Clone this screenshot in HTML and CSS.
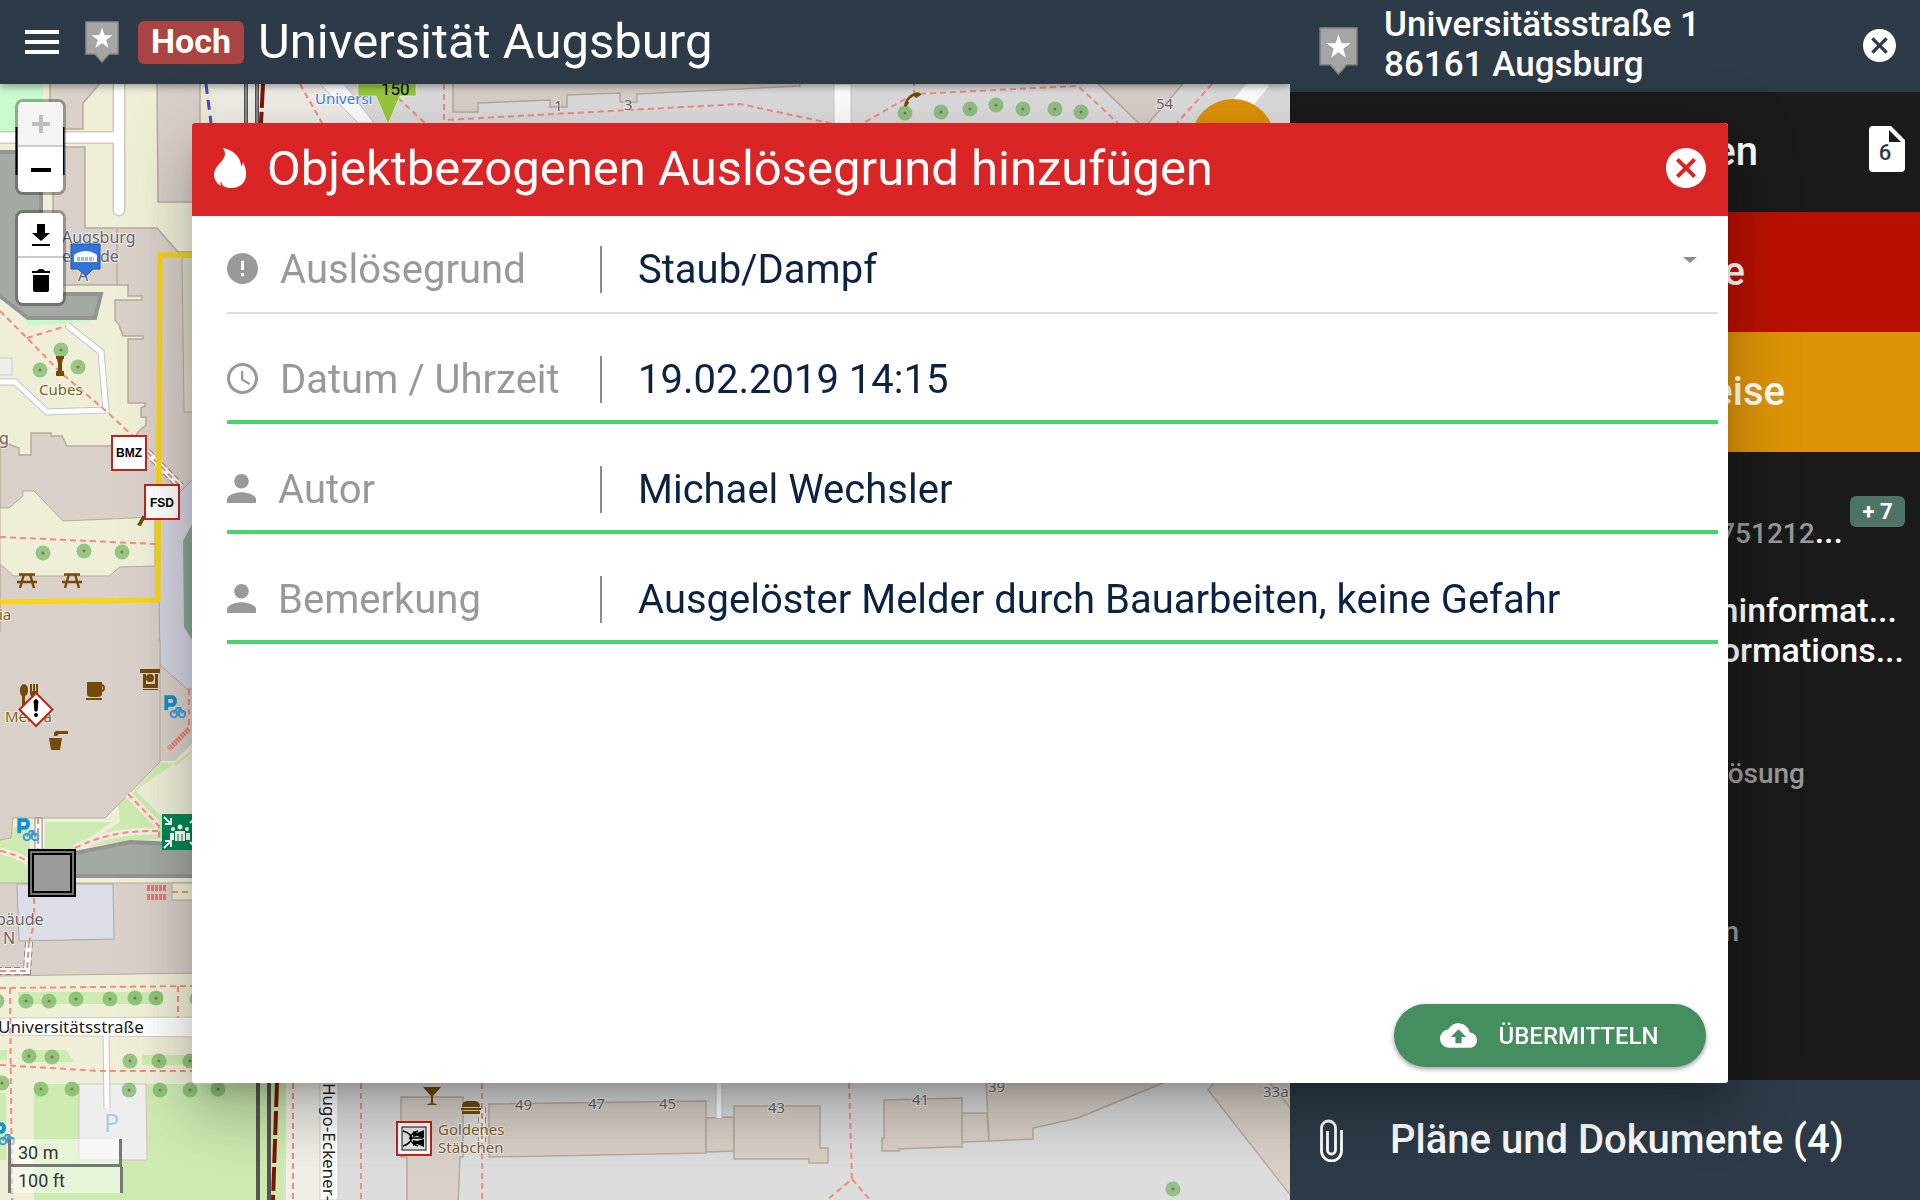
FILE: index.html
```html
<!DOCTYPE html>
<html lang="de">
<head>
    <meta charset="UTF-8">
    <meta name="viewport" content="width=device-width, initial-scale=1.0">
    <title>Universität Augsburg</title>
    <link rel="stylesheet" href="styles.css">
</head>
<body>
    <svg class="defs" width="0" height="0">
        <symbol id="pin" viewBox="0 0 38 47">
            <path d="M1 1H37V37H27L19 46L11 37H1Z" fill="#a5a5a5" stroke="#868686" stroke-width="1.500"/>
            <path d="M19 6L22.200 15.500H32L24.200 21.400L27 31L19 25.200L11 31L13.800 21.400L6 15.500H15.800Z" fill="#fff" stroke="#8b8b8b" stroke-width=".6"/>
        </symbol>
        <symbol id="close" viewBox="2 2 20 20">
            <path fill="currentColor" d="M12 2C6.470 2 2 6.470 2 12s4.470 10 10 10 10-4.470 10-10S17.530 2 12 2zm5 13.590L15.590 17 12 13.410 8.410 17 7 15.590 10.590 12 7 8.410 8.410 7 12 10.590 15.590 7 17 8.410 13.410 12 17 15.590z"/>
        </symbol>
        <symbol id="person" viewBox="4 4 16 16">
            <path fill="currentColor" d="M12 12c2.210 0 4-1.790 4-4s-1.790-4-4-4-4 1.790-4 4 1.790 4 4 4zm0 2c-2.670 0-8 1.340-8 4v2h16v-2c0-2.660-5.330-4-8-4z"/>
        </symbol>
        <symbol id="tree" viewBox="-8 -8 16 16">
            <circle r="7.500" fill="#6fb562" fill-opacity=".7"/>
            <circle r="1.500" fill="#a6692c"/>
        </symbol>
        <symbol id="bike" viewBox="0 0 20 22">
            <path d="M2 14V2H8a4 4 0 0 1 0 7H2" fill="none" stroke="#0f92cf" stroke-width="3.500"/>
            <g fill="none" stroke="#3f9fd4" stroke-width="1.800"><circle cx="9" cy="17.500" r="3"/><circle cx="16.500" cy="17.500" r="3"/><path d="M9 17L12 12H15L17 17M12 17L15 12"/></g>
        </symbol>
        <symbol id="bench" viewBox="0 0 20 15">
            <path d="M2 1.500H18M0 9H20M7 1L3 15M13 1L17 15" fill="none" stroke="#734a08" stroke-width="2.400"/>
        </symbol>
    </svg>

    <div class="app">
        <main class="main">
            <header class="topbar">
                <button class="menu-button" aria-label="Menü"><span></span><span></span><span></span></button>
                <svg class="topbar-pin"><use href="#pin"/></svg>
                <span class="priority">Hoch</span>
                <h1>Universität Augsburg</h1>
            </header>
            <div class="map">
                <svg class="map-canvas" viewBox="0 84 1290 1116" preserveAspectRatio="xMinYMin slice">
                    <rect y="84" width="1290" height="1116" fill="#dddddd"/>
                    <rect y="84" width="234" height="1116" fill="#efefd8"/>
                    <path d="M216 84H340L420 200V1083H216Z" fill="#f2efe9"/>

                    <!-- campus north -->
                    <rect y="84" width="43" height="50" fill="#c8facc"/>
                    <path d="M20 315L95 316L90 322L30 326Z" fill="#c8facc"/>
                    <g class="building">
                        <path d="M50 80H103L83 103V129H50Z"/>
                        <path d="M157 80H200V202H158Z"/>
                        <path d="M53 147H85V228H157L178 252H200V800H160L142 780H0V700H0V441L19 448V455H31V433H51V436H62L67 446H130L138 432L146 425V417H141V408L145 406V403H128V339H143V336H123L119 325L115 320V300H142V296H128V285H62L53 285Z"/>
                        <path d="M117 228V285" fill="none"/>
                    </g>
                    <path d="M182 257H200V412H184Z" fill="#deddc6" stroke="#b8ab9c"/>
                    <path class="road-case" d="M0 137.500H119M119 80V210"/>
                    <path class="road" d="M0 137.500H119M119 80V210"/>
                    <path class="grey-area" d="M-5 152H41V294H101L95 318H28L-5 292Z"/>
                    <path class="lane-case" d="M0 382H15L47 412L106 410L101 352L67 325"/>
                    <path class="lane" d="M0 382H15L47 412L106 410L101 352L67 325"/>
                    <rect x="-2" y="358" width="14" height="17" fill="#eeeeee" stroke="#cfc7bf"/>
                    <path class="footway" d="M0 311L27 338L60 372L106 411L135 438M27 338L66 326"/>
                    <path class="lawn" d="M0 508H9L23 496V491H34L63 521L155 517V566L120 567L109 576H14L0 564Z"/>
                    <path d="M192 480L158 514L160 665L187 689H200V480Z" fill="#d5d5e2" stroke="#a9a6ad"/>
                    <path d="M200 510L183 541L184 627L200 652Z" fill="#86a98f"/>
                    <path class="footway" d="M0 537L155 544M189 689V728"/>
                    <path d="M189 729L169 749" stroke="#f07870" stroke-width="5" stroke-dasharray="2 1"/>
                    <path d="M147 452L181 487" stroke="#8b8b8b" stroke-width="8" stroke-dasharray="6 3"/>
                    <path d="M147 452L181 487" stroke="#fff" stroke-width="6"/>
                    <path class="footway" d="M147 452L181 487"/>
                    <path class="outline" d="M200 255H160L158 600L0 602"/>

                    <!-- campus south -->
                    <path d="M0 780H142L161 761H175L200 735V890H0Z" fill="#efefd8"/>
                    <path d="M200 745L177 765L161 762L135 790L160 815L192 820V835L75 848L30 848L0 842V885H30L76 850L120 822L118 803Z" fill="#cdebb0"/>
                    <path d="M45 822H112L75 848H45Z" fill="#cdebb0"/>
                    <path d="M0 840H10L12 828L30 824V884H0Z" fill="#cdebb0"/>
                    <path d="M-5 640H160V762L105 818H13L11 838L-5 841Z" fill="#d9d0c9" stroke="#b8ab9c"/>
                    <path d="M-5 632H158V668H-5Z" fill="#d9d0c9"/>
                    <path class="path-case" d="M128 794L159 826M75 848C100 836 120 831 158 831M0 851Q17 854 28 862"/>
                    <path class="footway" d="M128 794L159 826V840M75 848C100 836 120 831 158 831M0 851Q17 854 28 862"/>
                    <path class="grey-area" d="M60 856L130 842L200 845V876H60Z"/>
                    <path d="M35 818H42V850H35Z" fill="#fff" stroke="#888"/>
                    <path class="footway" d="M38 818V850"/>
                    <path d="M-5 883H200V973L-5 976Z" fill="#d9d0c9" stroke="#b8ab9c"/>
                    <path d="M172 883H200V900H172Z" fill="#efefd8" stroke="#b8ab9c"/>
                    <path d="M17 884H113L114 939L19 941Z" fill="#dddde8" stroke="#a9a6ad"/>
                    <path d="M147 888H166M147 897H166" stroke="#f5706a" stroke-width="6" stroke-dasharray="3 1"/>
                    <path class="footway" d="M172 892H192M34 898V925L29 942"/>
                    <path d="M29 942L27 971H0" fill="none" stroke="#888" stroke-width="8" stroke-dasharray="6 3"/>
                    <path d="M29 942L27 971H0" fill="none" stroke="#fff" stroke-width="6"/>
                    <path class="footway" d="M29 942L27 971H0"/>
                    <path d="M18 992H163V1004H18ZM0 1050H7V1060H0ZM25 1050H66L74 1062H25ZM142 1055H200V1065H142Z" fill="#cdebb0"/>
                    <path d="M0 1093H6V1160H0ZM34 1084H288L283 1200H34Z" fill="#cdebb0"/>
                    <path d="M79 1084H146L147 1160H79Z" fill="#eeeeee" stroke="#ccc3ba"/>
                    <path d="M0 1018L200 1017V1037L0 1035Z" fill="#fff" stroke="#cfcabb"/>
                    <path class="lane-case" d="M106 1036L107 1108"/>
                    <path class="lane" d="M106 1034L107 1108"/>
                    <path class="footway" d="M0 988L192 986M10 988L12 1200M178 986V1018M0 1065L100 1071H192"/>
                    <g>
                        <use href="#tree" x="-11" y="993" width="16" height="16"/><use href="#tree" x="18" y="993" width="16" height="16"/>
                        <use href="#tree" x="41" y="993" width="16" height="16"/><use href="#tree" x="68" y="991" width="16" height="16"/>
                        <use href="#tree" x="102" y="991" width="16" height="16"/><use href="#tree" x="127" y="990" width="16" height="16"/>
                        <use href="#tree" x="148" y="990" width="16" height="16"/><use href="#tree" x="189" y="991" width="16" height="16"/>
                        <use href="#tree" x="21" y="1048" width="16" height="16"/><use href="#tree" x="44" y="1049" width="16" height="16"/>
                        <use href="#tree" x="122" y="1053" width="16" height="16"/><use href="#tree" x="151" y="1053" width="16" height="16"/>
                        <use href="#tree" x="182" y="1053" width="16" height="16"/><use href="#tree" x="-6" y="1075" width="16" height="16"/>
                        <use href="#tree" x="33" y="1081" width="16" height="16"/><use href="#tree" x="64" y="1081" width="16" height="16"/>
                        <use href="#tree" x="121" y="1082" width="16" height="16"/><use href="#tree" x="152" y="1082" width="16" height="16"/>
                        <use href="#tree" x="182" y="1082" width="16" height="16"/><use href="#tree" x="210" y="1081" width="16" height="16"/>
                        <use href="#tree" x="35" y="545" width="16" height="16"/><use href="#tree" x="76" y="543" width="16" height="16"/>
                        <use href="#tree" x="114" y="544" width="16" height="16"/><use href="#tree" x="53" y="342" width="16" height="16"/>
                        <use href="#tree" x="32" y="362" width="16" height="16"/><use href="#tree" x="70" y="359" width="16" height="16"/>
                    </g>

                    <!-- tram line -->
                    <path d="M286 1083V1200H320V1083Z" fill="#f2efe9"/>
                    <path d="M246 84V123M257 84V123M258 1083V1200M269 1083V1200" stroke="#555" stroke-width="4"/>
                    <path d="M246 84V123M257 84V123" stroke="#bbb" stroke-width="1"/>
                    <path d="M263 84L261 123M277 1083L273 1200" stroke="#7d1608" stroke-width="4" stroke-dasharray="24 4"/>
                    <path d="M206 84L211 123" stroke="#4747e0" stroke-width="3" stroke-dasharray="10 6"/>

                    <!-- strip above the dialog -->
                    <path d="M345 84H834V123H376Z" fill="#dddddd"/>
                    <path d="M320 84H344L374 123H358Z" fill="#fff" stroke="#c5c5c5"/>
                    <path class="building" d="M453 80V112H478V103L550 100V107H567V95L620 93V102H637V94L800 86V80Z"/>
                    <path class="footway" d="M300 84L322 123M398 98L425 123M444 84V120L740 104L834 124M914 80V94L1078 86L1118 123M914 94L860 125H950M1212 84L1177 123"/>
                    <path d="M834 84H851V130H834Z" fill="#fff" stroke="#c9c9c9"/>
                    <path class="building" d="M1098 84L1144 128L1183 84Z"/>
                    <path d="M1262 80L1220 130" stroke="#fff" stroke-width="19"/>
                    <use href="#tree" x="897" y="105" width="16" height="16"/><use href="#tree" x="933" y="104" width="16" height="16"/>
                    <use href="#tree" x="962" y="101" width="16" height="16"/><use href="#tree" x="988" y="97" width="16" height="16"/>
                    <use href="#tree" x="1015" y="101" width="16" height="16"/><use href="#tree" x="1047" y="101" width="16" height="16"/>
                    <use href="#tree" x="1073" y="104" width="16" height="16"/>
                    <path d="M906 107L909 103L908 101Q910 98 914 96L916 98L921 95Q920 91 914 93Q905 97 904 106Z" fill="#734a08"/>
                    <circle cx="1233" cy="141" r="42" fill="#dd9307"/>

                    <!-- strip below the dialog -->
                    <path d="M320 1083H338V1200H320Z" fill="#fff" stroke="#c9c9c9"/>
                    <g class="building">
                        <path d="M401 1097H463V1157H460L458 1205H407V1157H401Z"/>
                        <path d="M489 1104L706 1101V1153L489 1157Z"/>
                        <path d="M706 1118L734 1117V1151L706 1152Z"/>
                        <path d="M734 1106H820V1148H828V1163H809V1159H734Z"/>
                        <path d="M884 1100L962 1098V1147H950L899 1149V1151H882V1138H884Z"/>
                        <path d="M962 1113H987L989 1141L962 1142Z"/>
                        <path d="M986 1080H1170L1078 1118L1033 1128V1139L989 1141Z"/>
                        <path d="M1216 1080L1208 1090L1295 1201V1080Z"/>
                        <path d="M1270 1083L1292 1110" fill="none"/>
                    </g>
                    <path class="lane-case" d="M719 1083V1118"/>
                    <path class="lane" d="M719 1083V1118"/>
                    <path d="M482 1107V1142" stroke="#999" stroke-width="8" stroke-dasharray="6 4"/>
                    <path d="M482 1107V1142" stroke="#eee" stroke-width="6"/>
                    <path class="footway" d="M293 1083V1200M361 1083V1200M482 1083V1200M849 1083L852 1179L827 1200M852 1179L870 1200"/>
                    <use href="#tree" x="1165" y="1181" width="16" height="16"/>

                    <!-- labels -->
                    <g class="label">
                        <text x="62" y="243">Augsburg</text>
                        <text x="62" y="262">e</text><text x="100" y="262">de</text>
                        <text x="78" y="281">A</text>
                        <text x="-1" y="444">g</text>
                        <text x="-4" y="925">bäude</text>
                        <text x="3" y="944">N</text>
                    </g>
                    <g class="label brown">
                        <text x="39" y="395">Cubes</text>
                        <text x="-1" y="620">ia</text>
                        <text x="5" y="722">Mensa</text>
                        <text x="438" y="1135">Goldenes</text>
                        <text x="438" y="1153">Stäbchen</text>
                    </g>
                    <g class="label number">
                        <text x="554" y="111">1</text><text x="624" y="110">3</text><text x="1156" y="109">54</text>
                        <text x="515" y="1110">49</text><text x="588" y="1109">47</text><text x="659" y="1109">45</text>
                        <text x="768" y="1113">43</text><text x="912" y="1105">41</text><text x="988" y="1092">39</text><text x="1263" y="1097">33a</text>
                    </g>
                    <text class="label street" x="-2" y="1033">Universitätsstraße</text>
                    <text class="label street" transform="translate(323 1083) rotate(90)">Hugo-Eckener-S</text>
                    <text class="label blue" x="315" y="104">Universi</text>
                    <text class="parking" x="104" y="1132">P</text>

                    <!-- points of interest -->
                    <g fill="#734a08">
                        <path d="M56 356H64V359H63L62 364V371H64V376H56V371H58V364L57 359H56Z"/>
                        <path d="M137 525L143 515L145 518L141 526Z"/>
                        <path d="M20 690a4 6 0 0 1 8 0q0 5-3 6V706H22V696Q20 695 20 690ZM30 684H32V691H33V684H35V691H36V684H38V692Q38 696 35 697V706H32V697Q30 696 30 692Z"/>
                        <path d="M87 682H102V694Q102 697 98 697H91Q87 697 87 694ZM86 698H102V700H86Z"/>
                        <path d="M140 669H160V673H140ZM143 674H146V684H155V674H158V688H143ZM143 689H158V690H143Z"/><circle cx="150" cy="678" r="4"/>
                        <path d="M49 738H62L60 750H51ZM54 733Q55 730 59 731H68V734H59L57 736H54Z"/>
                        <path d="M423 1087H441L433 1096V1103L438 1105H426L431 1103V1096Z"/>
                        <path d="M462 1107Q462 1101 467 1101H475Q480 1101 480 1107ZM461 1108H481V1110H461ZM462 1111H480V1114H462Z"/>
                    </g>
                    <path d="M101 685a3 3 0 1 1 0 6" fill="none" stroke="#734a08" stroke-width="2"/>
                    <use href="#bench" x="17" y="573" width="20" height="15"/>
                    <use href="#bench" x="62" y="573" width="20" height="15"/>
                    <use href="#bike" x="164" y="695" width="22" height="24"/>
                    <use href="#bike" x="17" y="818" width="22" height="24"/>
                    <use href="#bike" x="-7" y="1122" width="22" height="24"/>

                    <!-- object markers -->
                    <path d="M71 244H100V269H93L86 276L78 269H71Z" fill="#3274d8" stroke="#1f56ad"/>
                    <path d="M74 255Q86 247 97 255V262H74Z" fill="#fff"/>
                    <path d="M77 258H94M77 260H94" stroke="#3274d8" stroke-width="1" stroke-dasharray="3 1"/>
                    <path d="M358 84H416V96H400L388 124L376 96H358Z" fill="#99c83c" stroke="#fff" stroke-width=".5"/>
                    <text class="hydrant" x="381" y="95">150</text>
                    <rect class="sign" x="112" y="436" width="34" height="34"/>
                    <text class="sign-text" x="129" y="457">BMZ</text>
                    <rect class="sign" x="145" y="485" width="34" height="34"/>
                    <text class="sign-text" x="162" y="507">FSD</text>
                    <path class="sign" d="M36 693L52.500 709.500L36 726L19.500 709.500Z"/>
                    <path d="M34 701Q36 698 38 701L37 711H35Z" stroke="#000"/><circle cx="36" cy="715" r="2"/>
                    <rect x="29" y="850" width="46" height="46" fill="#9b9b9b" stroke="#000" stroke-width="2"/>
                    <rect x="31" y="852" width="42" height="42" fill="none" stroke="#777" stroke-width="2"/>
                    <rect x="33" y="854" width="38" height="38" fill="none" stroke="#000" stroke-width="2"/>
                    <path d="M16.500 127V175M63.500 127V175" stroke="#000" stroke-width="2"/>
                    <rect x="162" y="814" width="36" height="36" fill="#008755"/>
                    <path d="M164 817L170 823M171 818V824H165M164 848L170 842M165 841H171V847M196 817L190 823M196 848L190 842" fill="none" stroke="#fff" stroke-width="2"/>
                    <g fill="#fff"><circle cx="180" cy="827" r="2.500"/><circle cx="173" cy="829" r="2"/><circle cx="187" cy="829" r="2"/><path d="M175 831H185V841H175ZM170 833H174V840H170ZM186 833H190V840H186Z"/></g>
                    <path d="M178 834V841M182 834V841" stroke="#008755"/>
                    <rect class="sign" x="397" y="1122" width="34" height="33"/>
                    <rect x="402" y="1127" width="24" height="23" fill="#e6e6e6" stroke="#111"/>
                    <path d="M403 1131Q410 1133 412 1138Q410 1144 403 1146M418 1131Q411 1133 410 1138Q411 1144 418 1146M409 1138H423" fill="none" stroke="#000" stroke-width="1.500"/>
                    <path d="M413 1131L417 1133L424 1130V1138L417 1136L413 1137ZM413 1146L417 1144L424 1147V1139L417 1141L413 1140Z"/>
                </svg>

                <div class="controls">
                    <div class="control-group">
                        <button aria-label="Vergrößern" disabled>
                            <svg width="20" height="20" viewBox="0 0 20 20"><path d="M10 1V19M1 10H19" stroke="#bdbdbd" stroke-width="4"/></svg>
                        </button>
                        <button aria-label="Verkleinern">
                            <svg width="20" height="20" viewBox="0 0 20 20"><path d="M0 10H20" stroke="#000" stroke-width="4"/></svg>
                        </button>
                    </div>
                    <div class="control-group">
                        <button aria-label="Herunterladen">
                            <svg width="20" height="24" viewBox="0 0 20 24"><path d="M6 1H14V10H19L10 18L1 10H6ZM1 21H19V23H1Z"/></svg>
                        </button>
                        <button aria-label="Löschen">
                            <svg width="20" height="24" viewBox="0 0 20 24"><path d="M1 2H6L8 0H12L14 2H19V4H1ZM2 6H18V21Q18 23 16 23H4Q2 23 2 21Z"/></svg>
                        </button>
                    </div>
                </div>
                <div class="scale">
                    <div class="scale-line">30 m</div>
                    <div class="scale-line imperial">100 ft</div>
                </div>
            </div>
        </main>

        <aside class="sidebar">
            <header class="address">
                <svg class="address-pin"><use href="#pin"/></svg>
                <p>Universitätsstraße 1<br>86161 Augsburg</p>
                <button class="icon-button close-small" aria-label="Schließen"><svg><use href="#close"/></svg></button>
            </header>
            <section class="panel">
                <h2 class="info">en</h2>
                <span class="doc-count">
                    <svg viewBox="0 0 36 46"><path d="M4 0H22L36 14V42Q36 46 32 46H4Q0 46 0 42V4Q0 0 4 0ZM20 4V16H32Z" fill="#fff" fill-rule="evenodd"/></svg>
                    <span>6</span>
                </span>
            </section>
            <section class="panel panel-red"><h2 class="danger">e</h2></section>
            <section class="panel panel-orange"><h2 class="notes">eise</h2></section>
            <section class="contacts">
                <div class="phone">
                    <p><span class="muted">751212</span>...</p>
                    <span class="more">+ 7</span>
                </div>
                <div class="details">
                    <p class="line-one">ninformat...</p>
                    <p class="line-two">ormations...</p>
                </div>
                <p class="muted cause">lösung</p>
                <p class="muted remark">n</p>
            </section>
            <footer class="documents">
                <svg class="clip" viewBox="0 0 23 43"><path d="M21.500 11V32a10 10 0 0 1-20 0V9a7 7 0 0 1 14 0V31a4 4 0 0 1-8 0V12" fill="none" stroke="#fff" stroke-width="2.800"/></svg>
                <h2>Pläne und Dokumente (4)</h2>
            </footer>
        </aside>
    </div>

    <div class="overlay">
        <form class="dialog">
            <header class="dialog-header">
                <svg class="flame" viewBox="0 0 32 40"><path d="M9 0C20 2 27 10 27 18Q29 17 29 14Q33 22 32 28C31 36 25 40 17 40C11 40 8 38 7 33Q6 36 7 38C2 35 0 31 0 26C1 17 11 13 11 6Q11 3 9 0Z" fill="#fff"/></svg>
                <h2>Objektbezogenen Auslösegrund hinzufügen</h2>
                <button type="button" class="icon-button close-large" aria-label="Schließen"><svg><use href="#close"/></svg></button>
            </header>
            <div class="row row-select">
                <label for="reason">
                    <svg class="icon" viewBox="2 2 20 20"><path fill="currentColor" d="M12 2C6.480 2 2 6.480 2 12s4.480 10 10 10 10-4.480 10-10S17.520 2 12 2zm1 15h-2v-2h2v2zm0-4h-2V7h2v6z"/></svg>
                    Auslösegrund
                </label>
                <select id="reason"><option>Staub/Dampf</option></select>
                <svg class="arrow" viewBox="0 0 14 6"><path d="M0 0H14L7 6Z" fill="#8d8d8d"/></svg>
            </div>
            <div class="row">
                <label for="date">
                    <svg class="icon" viewBox="2 2 20 20"><path fill="currentColor" d="M11.990 2C6.470 2 2 6.480 2 12s4.470 10 9.990 10C17.520 22 22 17.520 22 12S17.520 2 11.990 2zM12 20c-4.420 0-8-3.580-8-8s3.580-8 8-8 8 3.580 8 8-3.580 8-8 8zm.5-13H11v6l5.250 3.150.75-1.230-4.500-2.670z"/></svg>
                    Datum / Uhrzeit
                </label>
                <input id="date" type="text" value="19.02.2019 14:15">
            </div>
            <div class="row">
                <label for="author"><svg class="icon icon-person"><use href="#person"/></svg>Autor</label>
                <input id="author" type="text" value="Michael Wechsler">
            </div>
            <div class="row">
                <label for="comment"><svg class="icon icon-person"><use href="#person"/></svg>Bemerkung</label>
                <input id="comment" type="text" value="Ausgelöster Melder durch Bauarbeiten, keine Gefahr">
            </div>
            <div class="actions">
                <button type="button" class="submit">
                    <svg viewBox="0 4 24 16"><path fill="#fff" d="M19.350 10.040C18.670 6.590 15.640 4 12 4 9.110 4 6.600 5.640 5.350 8.040 2.340 8.360 0 10.910 0 14c0 3.310 2.690 6 6 6h13c2.760 0 5-2.240 5-5 0-2.640-2.050-4.780-4.650-4.960zM14 13v4h-4v-4H7l5-5 5 5h-3z"/></svg>
                    ÜBERMITTELN
                </button>
            </div>
        </form>
    </div>
</body>
</html>
```
FILE: styles.css
```css
* {
    box-sizing: border-box;
}
body {
    margin: 0;
    font-family: Roboto, sans-serif;
    color: #fff;
    background-color: #1a1a1a;
}
h1, h2, p {
    margin: 0;
}
h2 {
    font-size: 40px;
    font-weight: 500;
    line-height: 48px;
}
button {
    padding: 0;
    border: none;
    background: none;
    font-family: inherit;
}
.defs {
    position: absolute;
}
.app {
    display: grid;
    grid-template-columns: minmax(0, 1fr) 630px;
    height: 100vh;
    overflow: hidden;
}

/* left side */
.main {
    display: flex;
    flex-direction: column;
    min-height: 0;
}
.topbar {
    position: relative;
    z-index: 1;
    display: flex;
    align-items: center;
    flex: none;
    height: 84px;
    padding-left: 25px;
    background-color: #2d3b48;
    box-shadow: 0 2px 8px rgba(0, 0, 0, 0.4);
}
.menu-button {
    display: flex;
    flex-direction: column;
    gap: 6px;
    width: 34px;
    margin-right: 26px;
}
.menu-button span {
    height: 4px;
    background-color: #fff;
}
.topbar-pin {
    width: 34px;
    height: 42px;
    margin-right: 19px;
}
.priority {
    height: 43px;
    padding: 0 13px;
    border-radius: 6px;
    background-color: #a94442;
    font-size: 34px;
    font-weight: 700;
    line-height: 40px;
}
.topbar h1 {
    margin-left: 14px;
    font-size: 49px;
    font-weight: 400;
    line-height: 56px;
}
.map {
    position: relative;
    flex: 1;
    min-height: 0;
    overflow: hidden;
}
.map-canvas {
    display: block;
    width: 100%;
    height: 100%;
}
.building {
    fill: #d9d0c9;
    stroke: #b8ab9c;
    stroke-width: 1.5;
}
.lawn {
    fill: #efefd8;
    stroke: #b8ab9c;
}
.grey-area {
    fill: #a3aaa2;
    stroke: #949494;
    stroke-width: 4;
}
.road, .road-case, .lane, .lane-case, .path-case, .footway, .outline {
    fill: none;
}
.road {
    stroke: #fff;
    stroke-width: 10;
    stroke-linecap: round;
}
.road-case {
    stroke: #cfcabb;
    stroke-width: 13;
    stroke-linecap: round;
}
.lane {
    stroke: #fff;
    stroke-width: 5;
}
.lane-case {
    stroke: #c4c4c4;
    stroke-width: 7;
}
.path-case {
    stroke: #f3ecdc;
    stroke-width: 7;
}
.footway {
    stroke: #f58a7d;
    stroke-width: 2;
    stroke-dasharray: 6 4;
}
.outline {
    stroke: #f9d40f;
    stroke-width: 5;
}
.label {
    font-family: "Noto Sans", sans-serif;
    font-size: 16px;
    fill: #666;
    stroke: rgba(255, 255, 255, 0.6);
    stroke-width: 2;
    paint-order: stroke;
}
.brown {
    font-size: 15px;
    fill: #80602c;
}
.number {
    font-size: 15px;
}
.street {
    font-size: 17px;
    fill: #222;
}
.blue {
    font-size: 15px;
    fill: #3a7fe8;
}
.parking {
    font-family: "Noto Sans", sans-serif;
    font-size: 25px;
    fill: #a3cfe6;
}
.hydrant {
    font-size: 17px;
}
.sign {
    fill: #fff;
    stroke: #c0241c;
    stroke-width: 2;
}
.sign-text {
    font-family: "Liberation Sans", sans-serif;
    font-size: 12px;
    font-weight: 700;
    text-anchor: middle;
}
.controls {
    position: absolute;
    top: 15px;
    left: 15px;
    display: flex;
    flex-direction: column;
    gap: 15px;
}
.control-group {
    width: 51px;
    border: 3px solid rgba(0, 0, 0, 0.3);
    border-radius: 8px;
}
.control-group button {
    display: flex;
    align-items: center;
    justify-content: center;
    width: 100%;
    height: 45px;
    background-color: #fff;
}
.control-group button:first-child {
    border-bottom: 2px solid #ccc;
    border-radius: 5px 5px 0 0;
}
.control-group button:last-child {
    border-radius: 0 0 5px 5px;
}
.control-group button:disabled {
    background-color: #f4f4f4;
}
.scale {
    position: absolute;
    bottom: 7px;
    left: 8px;
    color: #333;
    font-size: 18px;
    line-height: 28px;
}
.scale-line {
    width: 114px;
    height: 28px;
    padding-left: 7px;
    border: 3px solid #777;
    border-top: none;
    background-color: rgba(255, 255, 255, 0.5);
}
.imperial {
    width: 115px;
    height: 26px;
    border-bottom: none;
}

/* right side */
.sidebar {
    position: relative;
    z-index: 1;
    display: flex;
    flex-direction: column;
    min-height: 0;
    background-color: #1a1a1a;
}
.address {
    display: flex;
    align-items: center;
    flex: none;
    height: 92px;
    padding: 0 24px 2px 29px;
    background-color: #2d3b48;
}
.address-pin {
    width: 39px;
    height: 48px;
    margin-top: 12px;
}
.address p {
    flex: 1;
    margin-left: 26px;
    font-size: 35px;
    font-weight: 500;
    line-height: 40px;
}
.icon-button {
    display: flex;
    cursor: pointer;
    color: #fff;
}
.icon-button svg {
    width: 100%;
    height: 100%;
}
.close-small {
    width: 33px;
    height: 33px;
}
.panel {
    display: flex;
    align-items: center;
    justify-content: space-between;
    flex: none;
    height: 120px;
    padding: 0 15px 0 101px;
}
.panel h2 {
    text-align: right;
}
.panel .info {
    width: 367px;
}
.panel .danger {
    width: 354px;
}
.panel .notes {
    width: 394px;
}
.panel-red {
    background-color: #b81000;
}
.panel-orange {
    background-color: #dd9307;
}
.doc-count {
    display: grid;
    width: 36px;
    height: 46px;
    margin-bottom: 6px;
}
.doc-count svg, .doc-count span {
    grid-area: 1 / 1;
}
.doc-count span {
    padding: 14px 4px 0 0;
    color: #2d3b48;
    font-size: 22px;
    font-weight: 500;
    line-height: 26px;
    text-align: center;
}
.contacts {
    flex: 1;
    min-height: 0;
    padding: 44px 15px 0 101px;
    overflow: hidden;
    font-size: 34px;
    font-weight: 500;
    line-height: 40px;
    text-align: right;
}
.muted {
    color: #999;
    font-size: 28px;
}
.phone {
    display: flex;
    align-items: flex-start;
    justify-content: flex-end;
    gap: 7px;
    margin-bottom: 36px;
}
.phone p {
    margin-top: 15px;
}
.more {
    width: 55px;
    height: 31px;
    border-radius: 6px;
    background-color: #4d7466;
    font-size: 22px;
    font-weight: 700;
    line-height: 31px;
    text-align: center;
}
.line-one {
    padding-right: 8px;
}
.line-two {
    padding-right: 1px;
}
.cause {
    margin-top: 84px;
    padding-right: 100px;
}
.remark {
    margin-top: 118px;
    padding-right: 166px;
}
.documents {
    display: flex;
    align-items: center;
    flex: none;
    height: 120px;
    padding-left: 30px;
    background-color: #2d3b48;
}
.clip {
    width: 23px;
    height: 43px;
    margin-right: 47px;
}

/* dialog */
.overlay {
    position: fixed;
    z-index: 2;
    inset: 6px 0 0;
    display: flex;
    align-items: center;
    justify-content: center;
}
.dialog {
    display: flex;
    flex-direction: column;
    width: 80%;
    height: 80vh;
    overflow: hidden;
    border-radius: 3px;
    background-color: #fff;
    box-shadow: 0 16px 22px -10px rgba(0, 0, 0, 0.2),
        0 36px 57px 4px rgba(0, 0, 0, 0.14),
        0 14px 70px 12px rgba(0, 0, 0, 0.12);
}
.dialog-header {
    display: flex;
    align-items: center;
    flex: none;
    height: 93px;
    padding: 0 22px 3px;
    background-color: #d92526;
}
.flame {
    width: 32px;
    height: 40px;
}
.dialog-header h2 {
    flex: 1;
    margin-left: 21px;
    padding-top: 2px;
    font-size: 49px;
    font-weight: 400;
    line-height: 56px;
}
.close-large {
    width: 40px;
    height: 40px;
}
.row {
    display: flex;
    align-items: center;
    height: 110px;
    margin: 0 10px 0 35px;
    padding: 42px 0 17px;
    border-bottom: 4px solid #46d370;
}
.row-select {
    height: 98px;
    padding: 30px 0 19px;
    border-bottom: 2px solid #e0e0e0;
}
.row label {
    display: flex;
    align-items: center;
    gap: 22px;
    width: 373px;
    color: #999;
    font-size: 40px;
    line-height: 47px;
}
.icon {
    width: 31px;
    height: 31px;
    margin-bottom: 2px;
}
.icon-person {
    width: 29px;
    height: 29px;
}
.row input, .row select {
    flex: 1;
    min-width: 0;
    height: 47px;
    padding: 0 0 0 36px;
    border: none;
    border-left: 2px solid #8b8b8b;
    border-radius: 0;
    outline: none;
    appearance: none;
    background: none;
    color: #0b2242;
    font-family: inherit;
    font-size: 40px;
}
.arrow {
    width: 14px;
    height: 6px;
    margin: 0 21px 20px 0;
}
.actions {
    display: flex;
    justify-content: flex-end;
    margin-top: auto;
    padding: 0 22px 16px;
}
.submit {
    display: flex;
    align-items: center;
    justify-content: center;
    gap: 22px;
    width: 312px;
    height: 63px;
    padding-right: 2px;
    border-radius: 32px;
    background-color: #458e5f;
    box-shadow: 0 2px 5px rgba(0, 0, 0, 0.4);
    color: #fff;
    font-size: 24px;
    font-weight: 500;
}
.submit svg {
    width: 37px;
    height: 25px;
}
```
